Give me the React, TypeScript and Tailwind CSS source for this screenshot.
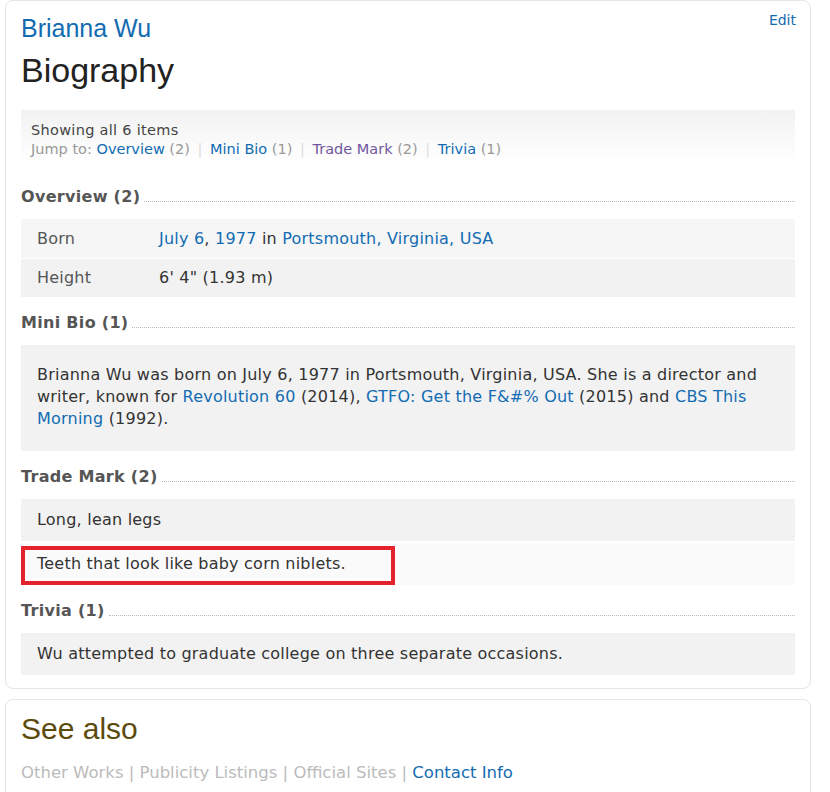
import React from 'react';

const verdana = { fontFamily: '"DejaVu Sans", Verdana, sans-serif' };
const arial = { fontFamily: '"Liberation Sans", Arial, sans-serif' };

// ─── Pieces ───────────────────────────────────────────────────────────────────

function SectionHeading({ title, count, first }: { title: string; count: number; first?: boolean }) {
    return (
        <div className={`flex items-end gap-1 mb-[12px] ${first ? 'mt-[24px]' : 'mt-[16px]'}`}>
            <h4 className="font-bold text-[16px] leading-[20px] tracking-[0.3px] text-[#555] whitespace-nowrap">
                {title} ({count})
            </h4>
            <div className="flex-1 border-b border-dotted border-[#bbb] mb-[5px]" />
        </div>
    );
}

function A({ children, visited }: { children: React.ReactNode; visited?: boolean }) {
    return <a className={visited ? 'text-[#70579d]' : 'text-[#136cb2]'}>{children}</a>;
}

function Sep() {
    return <span className="text-[#ddd] mx-[3px]">|</span>;
}

// ─── Component ────────────────────────────────────────────────────────────────

export default function App() {
    return (
        <div className="bg-white min-h-[792px] pl-[5px] pr-[19px] text-[#333]" style={verdana}>
            {/* Biography card */}
            <div className="border border-[#e5e5e5] rounded-[8px] px-[15px] pb-[13px] relative">
                <a className="absolute right-[14px] top-[9px] text-[14px] text-[#136cb2]">Edit</a>

                <h3 className="text-[25px] leading-[28px] text-[#136cb2] pt-[13px]" style={arial}>
                    Brianna Wu
                </h3>
                <h1 className="text-[34px] leading-[40px] text-[#222] mt-[8px]" style={arial}>
                    Biography
                </h1>

                {/* Jump bar */}
                <div className="mt-[20px] px-[10px] pt-[11px] pb-[4px] bg-gradient-to-b from-[#f2f2f2] to-white text-[14.5px] leading-[19px]">
                    <div className="text-[#444] tracking-[0.3px]">Showing all 6 items</div>
                    <div className="text-[#999]">
                        Jump to: <A>Overview</A> (2) <Sep /> <A>Mini Bio</A> (1) <Sep /> <A visited>Trade Mark</A> (2){' '}
                        <Sep /> <A>Trivia</A> (1)
                    </div>
                </div>

                <div className="text-[16px] leading-[22px] tracking-[0.22px]">
                    <SectionHeading title="Overview" count={2} first />
                    <div className="flex flex-col gap-px">
                        <div className="flex items-center bg-[#f6f6f6] h-[39px] px-[16px]">
                            <span className="w-[122px] text-[#555]">Born</span>
                            <span>
                                <A>July 6</A>, <A>1977</A> in <A>Portsmouth, Virginia, USA</A>
                            </span>
                        </div>
                        <div className="flex items-center bg-[#f2f2f2] h-[38px] px-[16px]">
                            <span className="w-[122px] text-[#555]">Height</span>
                            <span>6' 4" (1.93 m)</span>
                        </div>
                    </div>

                    <SectionHeading title="Mini Bio" count={1} />
                    <div className="bg-[#f2f2f2] px-[16px] pt-[19px] pb-[21px]">
                        Brianna Wu was born on July 6, 1977 in Portsmouth, Virginia, USA. She is a director and writer,
                        known for <A>Revolution 60</A> (2014), <A>GTFO: Get the F&amp;#% Out</A> (2015) and{' '}
                        <A>CBS This Morning</A> (1992).
                    </div>

                    <SectionHeading title="Trade Mark" count={2} />
                    <div className="flex flex-col gap-[2px]">
                        <div className="flex items-center bg-[#f2f2f2] h-[42px] px-[16px]">Long, lean legs</div>
                        <div className="relative flex items-center bg-[#fafafa] h-[42px] px-[16px]">
                            Teeth that look like baby corn niblets.
                            <div className="absolute left-0 top-[3px] w-[374px] h-[39px] border-[4px] border-[#e3222d]" />
                        </div>
                    </div>

                    <SectionHeading title="Trivia" count={1} />
                    <div className="flex items-center bg-[#f2f2f2] h-[42px] px-[16px]">
                        Wu attempted to graduate college on three separate occasions.
                    </div>
                </div>
            </div>

            {/* See also card */}
            <div className="mt-[10px] border border-[#e5e5e5] rounded-[8px] px-[15px] pt-[12px] pb-[20px]">
                <h2 className="text-[30px] leading-[34px] text-[#5c4a0c]" style={arial}>
                    See also
                </h2>
                <div className="mt-[17px] text-[16.5px] leading-[20px] text-[#bbb]">
                    Other Works | Publicity Listings | Official Sites | <A>Contact Info</A>
                </div>
            </div>
        </div>
    );
}
